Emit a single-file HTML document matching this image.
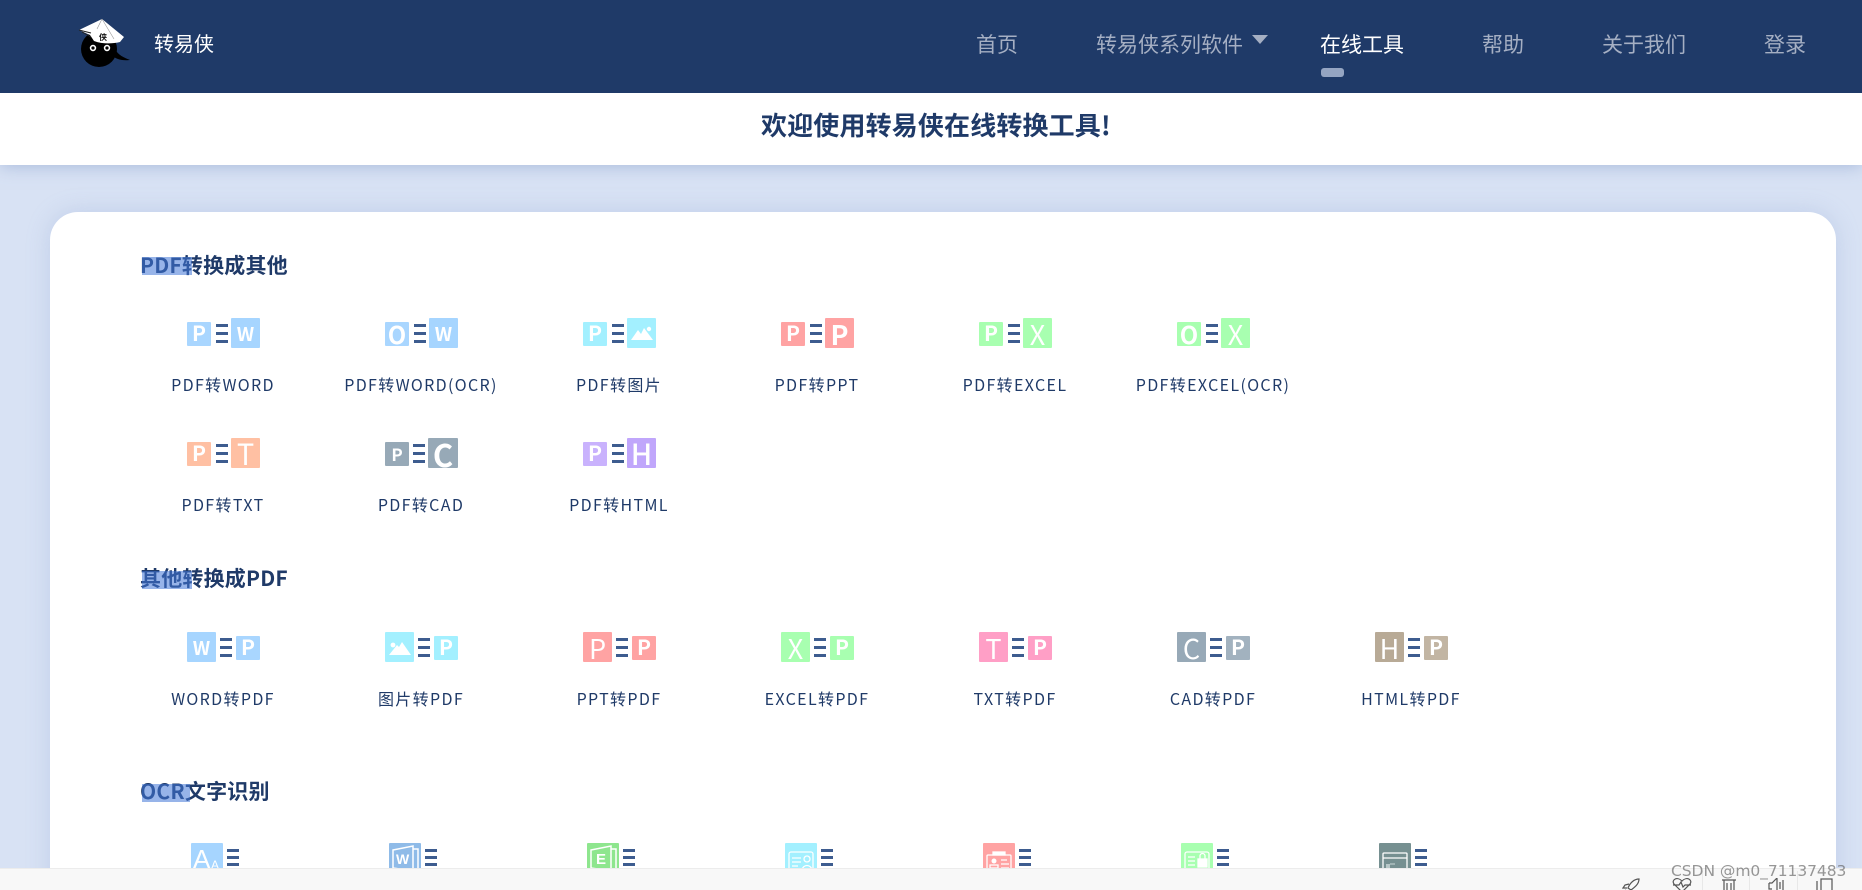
<!DOCTYPE html>
<html lang="zh-CN">
<head>
<meta charset="utf-8">
<title>转易侠在线转换工具</title>
<style>
*{margin:0;padding:0;box-sizing:border-box}
html,body{width:1862px;height:890px;overflow:hidden}
body{position:relative;background:#d8e2f4;font-family:"Liberation Sans","Noto Sans CJK SC",sans-serif;color:#1f3a68}
.hdr{position:absolute;left:0;top:0;width:1862px;height:93px;background:#1f3a68;z-index:3}
.nav{position:absolute;top:29px;font-size:21px;line-height:30px;color:#a5afc3;white-space:nowrap;font-family:"Noto Sans CJK SC",sans-serif;font-weight:400}
.brand{position:absolute;left:154px;top:28px;font-size:20px;line-height:30px;color:#fff;font-family:"Noto Sans CJK SC",sans-serif}
.tri{position:absolute;left:1252px;top:35px;width:0;height:0;border-left:8px solid transparent;border-right:8px solid transparent;border-top:9px solid #a5afc3}
.pill{position:absolute;left:1321px;top:68px;width:23px;height:9px;border-radius:3px;background:#95a5c2}
.wel{position:absolute;left:0;top:93px;width:1862px;height:72px;background:#fff;z-index:2;box-shadow:0 1px 16px rgba(120,145,195,.5)}
.wel div{position:absolute;left:761px;top:13px;font-size:26px;line-height:38px;font-weight:700;letter-spacing:.15px;white-space:nowrap;font-family:"Noto Sans CJK SC",sans-serif}
.card{position:absolute;left:50px;top:212px;width:1786px;height:720px;background:#fff;border-radius:28px;box-shadow:0 0 24px rgba(130,155,205,.28);z-index:1}
.t{position:absolute;left:140px;font-size:21px;line-height:28px;font-weight:700;letter-spacing:.2px;white-space:nowrap;z-index:2;font-family:"Noto Sans CJK SC",sans-serif}
.hl{position:absolute;left:142px;width:50px;height:18px;background:rgba(65,118,215,.55);z-index:2}
.lb{position:absolute;width:198px;text-align:center;font-size:16px;line-height:22px;letter-spacing:1.35px;white-space:nowrap;z-index:2;font-family:"Noto Sans CJK SC",sans-serif;font-weight:400;color:#1f3a68}
.ic{position:absolute;width:73px;height:31px;z-index:2}
.ic>*{position:absolute}
.s,.b{display:flex;align-items:center;justify-content:center;color:#fff;border-radius:1px;overflow:hidden;font-family:"Noto Sans CJK SC",sans-serif;line-height:1}
.s{width:24px;height:24px;top:3.5px;font-size:21px;font-weight:700}
.b{width:29px;height:30px;top:0;font-size:27px}
.sl{left:0}.sr{left:49px}.bl{left:0}.br{left:44px}
.l{width:12px;height:19px;top:6px;background:linear-gradient(#3d5c8f 0 3px,transparent 3px 8px,#3d5c8f 8px 11px,transparent 11px 16px,#3d5c8f 16px 19px)}
.bb{font-weight:700;font-size:19px}
.ocr{position:absolute;top:843px;width:48px;height:31px;z-index:2}
.ocr svg,.ocr i{position:absolute}
.ocr .l{left:36px;top:6px;width:12px;height:17px;background:linear-gradient(#3d5c8f 0 3px,transparent 3px 7px,#3d5c8f 7px 10px,transparent 10px 14px,#3d5c8f 14px 17px)}
.bar{position:absolute;left:0;top:868px;width:1862px;height:22px;background:#f8f8f8;border-top:1px solid #ececec;z-index:4;overflow:hidden}
.bar svg{position:absolute;top:9px;fill:none;stroke:#555;stroke-width:1.2}
.bar i{position:absolute;top:2px;width:1px;height:20px;background:#e8e8e8}
.wm{position:absolute;left:1671px;top:861px;font-size:15.5px;line-height:20px;color:rgba(95,95,95,.65);z-index:5;white-space:nowrap;font-family:"DejaVu Sans",sans-serif;letter-spacing:-.05px}
</style>
</head>
<body>
<div class="hdr">
  <svg style="position:absolute;left:76px;top:17px" width="58" height="54" viewBox="0 0 58 54">
    <path d="M38 30 C41 37 46 40 54 43 C46 44 38 42 35 37Z" fill="#000"/>
    <circle cx="23" cy="32" r="18" fill="#000"/>
    <path d="M3 13 L26 2 L48 20 L44 25 C36 27 26 27 18 24 L14 18Z" fill="#fff"/>
    <path d="M3 13 L15 16 M6 15 L15 20" stroke="#222" stroke-width="1" fill="none"/>
    <path d="M26 2 L21 12 M26 2 L38 22" stroke="#999" stroke-width=".6" fill="none"/>
    <text x="23" y="23" font-size="8" font-weight="700" fill="#111" font-family="Noto Sans CJK SC,sans-serif">侠</text>
    <circle cx="17" cy="31" r="2.4" fill="#000" stroke="#fff" stroke-width="1.6"/>
    <circle cx="31" cy="31" r="2.4" fill="#000" stroke="#fff" stroke-width="1.6"/>
  </svg>
  <div class="brand">转易侠</div>
  <div class="nav" style="left:976px">首页</div>
  <div class="nav" style="left:1096px">转易侠系列软件</div>
  <div class="tri"></div>
  <div class="nav" style="left:1320px;color:#fff">在线工具</div>
  <div class="pill"></div>
  <div class="nav" style="left:1482px">帮助</div>
  <div class="nav" style="left:1602px">关于我们</div>
  <div class="nav" style="left:1764px">登录</div>
</div>
<div class="wel"><div>欢迎使用转易侠在线转换工具!</div></div>
<div class="card"></div>

<div class="t" style="top:251px">PDF转换成其他</div><div class="hl" style="top:257px"></div>
<div class="t" style="top:564px">其他转换成PDF</div><div class="hl" style="top:571px"></div>
<div class="t" style="top:777px">OCR文字识别</div><div class="hl" style="top:784px;width:48px"></div>

<!-- Row 1 -->
<div class="ic" style="left:187px;top:318px"><div class="s sl" style="background:#a9d6ff">P</div><div class="l" style="left:29px"></div><div class="b br" style="background:#a6d5ff"><span class="bb">W</span></div></div>
<div class="lb" style="left:124px;top:373px">PDF转WORD</div>
<div class="ic" style="left:385px;top:318px"><div class="s sl" style="background:#a9d6ff;font-size:24px">O</div><div class="l" style="left:29px"></div><div class="b br" style="background:#a6d5ff"><span class="bb">W</span></div></div>
<div class="lb" style="left:322px;top:373px">PDF转WORD(OCR)</div>
<div class="ic" style="left:583px;top:318px"><div class="s sl" style="background:#a3f0ff">P</div><div class="l" style="left:29px"></div><div class="b br" style="background:#a3f0ff"><svg width="22" height="14" viewBox="0 0 22 14"><path d="M0 14 L7 4 L10 8 L13 2 L22 14Z" fill="#fff"/><circle cx="18" cy="3" r="2.2" fill="#fff"/></svg></div></div>
<div class="lb" style="left:520px;top:373px">PDF转图片</div>
<div class="ic" style="left:781px;top:318px"><div class="s sl" style="background:#ffa3a3">P</div><div class="l" style="left:29px"></div><div class="b br" style="background:#ffa3a3;font-weight:700">P</div></div>
<div class="lb" style="left:718px;top:373px">PDF转PPT</div>
<div class="ic" style="left:979px;top:318px"><div class="s sl" style="background:#a8ffb0">P</div><div class="l" style="left:29px"></div><div class="b br" style="background:#a8ffb0">X</div></div>
<div class="lb" style="left:916px;top:373px">PDF转EXCEL</div>
<div class="ic" style="left:1177px;top:318px"><div class="s sl" style="background:#a8ffb0;font-size:24px">O</div><div class="l" style="left:29px"></div><div class="b br" style="background:#a8ffb0">X</div></div>
<div class="lb" style="left:1114px;top:373px">PDF转EXCEL(OCR)</div>

<!-- Row 2 -->
<div class="ic" style="left:187px;top:438px"><div class="s sl" style="background:#ffc0a3">P</div><div class="l" style="left:29px"></div><div class="b br" style="background:#ffc0a3;font-size:29px">T</div></div>
<div class="lb" style="left:124px;top:493px">PDF转TXT</div>
<div class="ic" style="left:385px;top:438px"><div class="s sl" style="background:#97a9b7;font-size:17px">P</div><div class="l" style="left:28px"></div><div class="b br" style="background:#97a9b7;font-size:31px;font-weight:700;left:43px;width:30px">C</div></div>
<div class="lb" style="left:322px;top:493px">PDF转CAD</div>
<div class="ic" style="left:583px;top:438px"><div class="s sl" style="background:#c9b2fd">P</div><div class="l" style="left:29px"></div><div class="b br" style="background:#c0a6fb;font-size:29px;font-weight:500">H</div></div>
<div class="lb" style="left:520px;top:493px">PDF转HTML</div>

<!-- Section 2 -->
<div class="ic" style="left:187px;top:632px"><div class="b bl" style="background:#a6d5ff"><span class="bb">W</span></div><div class="l" style="left:33px"></div><div class="s sr" style="background:#a9d6ff">P</div></div>
<div class="lb" style="left:124px;top:687px">WORD转PDF</div>
<div class="ic" style="left:385px;top:632px"><div class="b bl" style="background:#a3f0ff"><svg width="22" height="16" viewBox="0 0 22 16"><path d="M0 16 L22 16 L13 3 L10 8 L8 6 Z" fill="#fff"/><circle cx="4" cy="6" r="2.4" fill="#fff"/></svg></div><div class="l" style="left:33px"></div><div class="s sr" style="background:#a3f0ff">P</div></div>
<div class="lb" style="left:322px;top:687px">图片转PDF</div>
<div class="ic" style="left:583px;top:632px"><div class="b bl" style="background:#ffa3a3">P</div><div class="l" style="left:33px"></div><div class="s sr" style="background:#ffa3a3">P</div></div>
<div class="lb" style="left:520px;top:687px">PPT转PDF</div>
<div class="ic" style="left:781px;top:632px"><div class="b bl" style="background:#a8ffb0">X</div><div class="l" style="left:33px"></div><div class="s sr" style="background:#a8ffb0">P</div></div>
<div class="lb" style="left:718px;top:687px">EXCEL转PDF</div>
<div class="ic" style="left:979px;top:632px"><div class="b bl" style="background:#ff9fc6">T</div><div class="l" style="left:33px"></div><div class="s sr" style="background:#ff9fc6">P</div></div>
<div class="lb" style="left:916px;top:687px">TXT转PDF</div>
<div class="ic" style="left:1177px;top:632px"><div class="b bl" style="background:#97a9b7">C</div><div class="l" style="left:33px"></div><div class="s sr" style="background:#a2b2bf">P</div></div>
<div class="lb" style="left:1114px;top:687px">CAD转PDF</div>
<div class="ic" style="left:1375px;top:632px"><div class="b bl" style="background:#b8aa96">H</div><div class="l" style="left:33px"></div><div class="s sr" style="background:#c2b5a3">P</div></div>
<div class="lb" style="left:1312px;top:687px">HTML转PDF</div>

<!-- OCR -->
<div class="ocr" style="left:191px"><svg width="32" height="31"><rect width="32" height="31" rx="1" fill="#a6d5ff"/><text x="2" y="25" font-size="26" fill="#fff" font-family="Liberation Sans,sans-serif">A</text><text x="20" y="26" font-size="12" fill="#fff" font-family="Liberation Sans,sans-serif">A</text></svg><i class="l"></i></div>
<div class="ocr" style="left:389px"><svg width="32" height="31" fill="none" stroke="#fff" stroke-width="1.5"><rect width="32" height="31" rx="1" fill="#8fbbe8" stroke="none"/><path d="M4 7 L24 3 V28 L4 25Z"/><path d="M24 6 H29 V26 H24"/><text x="7" y="21" font-size="14" font-weight="700" fill="#fff" stroke="none" font-family="Liberation Sans,sans-serif">W</text></svg><i class="l"></i></div>
<div class="ocr" style="left:587px"><svg width="32" height="31" fill="none" stroke="#fff" stroke-width="1.5"><rect width="32" height="31" rx="1" fill="#8ee68e" stroke="none"/><path d="M4 7 L24 3 V28 L4 25Z"/><path d="M24 6 H29 V26 H24"/><text x="9" y="21" font-size="15" font-weight="700" fill="#fff" stroke="none" font-family="Liberation Sans,sans-serif">E</text></svg><i class="l"></i></div>
<div class="ocr" style="left:785px"><svg width="32" height="31" fill="none" stroke="#fff" stroke-width="1.3"><rect width="32" height="31" rx="1" fill="#a3f0ff" stroke="none"/><rect x="4" y="9" width="24" height="22" rx="2"/><path d="M7 15H16M7 19H16M7 23H13"/><circle cx="22" cy="16" r="3"/><path d="M17 27 C18 21 26 21 27 27"/></svg><i class="l"></i></div>
<div class="ocr" style="left:983px"><svg width="32" height="31" fill="none" stroke="#fff" stroke-width="1.3"><rect width="32" height="31" rx="1" fill="#ffa3a3" stroke="none"/><rect x="4" y="12" width="24" height="18" rx="1"/><rect x="10" y="9" width="12" height="3" fill="#fff"/><circle cx="11" cy="18" r="2.5" fill="#fff" stroke="none"/><path d="M7 25H15V22H7ZM18 17H24M18 21H26M18 25H26"/></svg><i class="l"></i></div>
<div class="ocr" style="left:1181px"><svg width="32" height="31" fill="none" stroke="#fff" stroke-width="1.3"><rect width="32" height="31" rx="1" fill="#a8ffb0" stroke="none"/><rect x="4" y="9" width="24" height="22" rx="2"/><path d="M7 14H14M7 18H14M7 22H14"/><rect x="17" y="16" width="9" height="8" fill="#fff"/><path d="M19 16 V13 A2.5 2.5 0 0 1 24 13 V16"/></svg><i class="l"></i></div>
<div class="ocr" style="left:1379px"><svg width="32" height="31" fill="none" stroke="#fff" stroke-width="1.3"><rect width="32" height="31" rx="1" fill="#769091" stroke="none"/><rect x="4" y="10" width="24" height="19" rx="1"/><path d="M4 15H28"/><rect x="7" y="21" width="4" height="4" fill="#b8c8c8" stroke="none"/><path d="M11 21H16" stroke="#b8c8c8"/></svg><i class="l"></i></div>

<div class="bar">
  <svg style="left:1622px" width="19" height="14" viewBox="0 0 19 14"><path d="M6 10 C8 5 12 1 17 1 C17 6 13 9 9 12Z M7 6 L3 7 L1 10 L5 10 M9 12 L8 14 M4 12 L1 14"/></svg>
  <svg style="left:1672px" width="20" height="14" viewBox="0 0 20 14"><path d="M10 14 L2 6 C-1 2 5 -2 10 3 C15 -2 21 2 18 6Z M1 7 H7 L9 4 L11 9 L13 7 H19"/></svg>
  <i style="left:1702px"></i>
  <svg style="left:1722px" width="14" height="14" viewBox="0 0 14 14"><path d="M0 2H14 M2 2V14H12V2 M5 5V14 M9 5V14"/></svg>
  <i style="left:1749px"></i>
  <svg style="left:1768px" width="16" height="14" viewBox="0 0 16 14"><path d="M1 5H4L9 0V14 M1 5V11H4 M12 4V11 M15 2V13"/></svg>
  <i style="left:1797px"></i>
  <svg style="left:1816px" width="17" height="14" viewBox="0 0 17 14"><rect x="5" y="1" width="11" height="14"/><path d="M1 3V14"/></svg>
</div>
<div class="wm">CSDN @m0_71137483</div>
</body>
</html>
